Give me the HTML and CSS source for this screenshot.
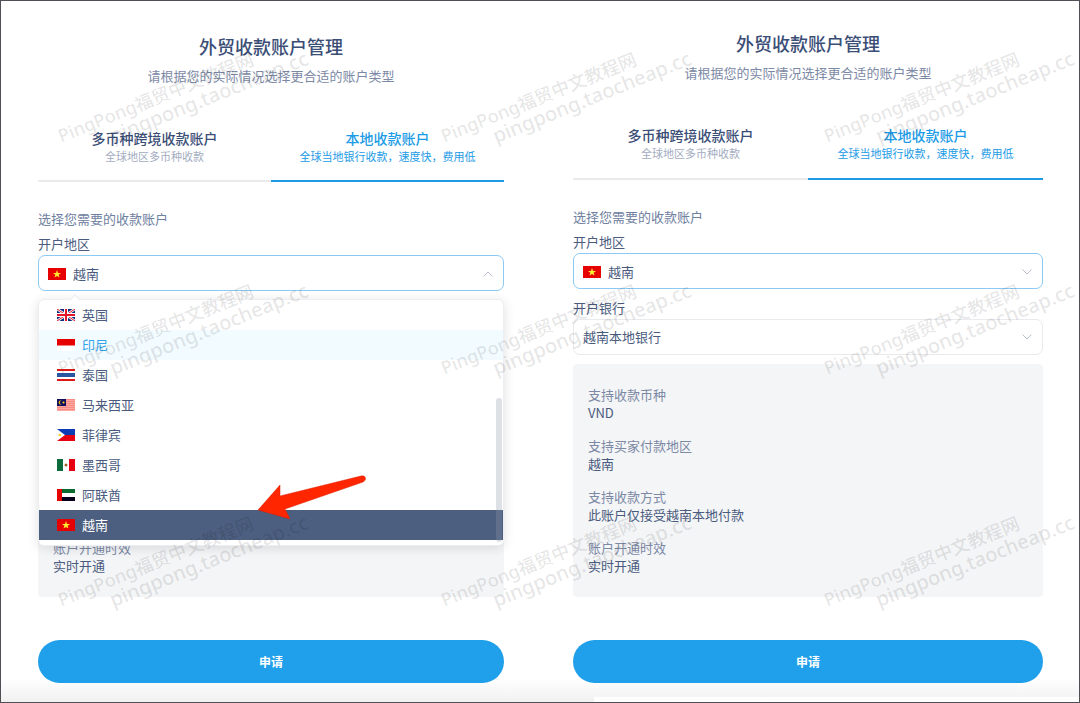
FILE: index.html
```
<!DOCTYPE html>
<html lang="zh-CN">
<head>
  <meta charset="UTF-8">
  <meta name="viewport" content="width=device-width, initial-scale=1">
  <title>外贸收款账户管理</title>
  <link rel="stylesheet" href="styles.css">
</head>
<body>

  <!-- shared flag for the selected region -->
  <svg class="defs" aria-hidden="true">
    <symbol id="flag-vn" viewBox="0 0 18 12">
      <rect width="18" height="12" fill="#e60000"/>
      <path d="M9 2l1 2.900h3l-2.400 1.800.9 2.900L9 7.900 6.500 9.600l.9-2.900L5 4.900h3z" fill="#ffee2e"/>
    </symbol>
  </svg>

  <main class="page">

    <section class="card card-open">
      <h1>外贸收款账户管理</h1>
      <p class="subline">请根据您的实际情况选择更合适的账户类型</p>

      <nav class="tabs">
        <a class="tab" href="#global">
          <span class="tab-title">多币种跨境收款账户</span>
          <span class="tab-note">全球地区多币种收款</span>
        </a>
        <a class="tab active" href="#local">
          <span class="tab-title">本地收款账户</span>
          <span class="tab-note">全球当地银行收款，速度快，费用低</span>
        </a>
      </nav>

      <form>
        <p class="hint">选择您需要的收款账户</p>

        <label for="region-1">开户地区</label>
        <div class="select-box focused">
          <svg class="flag"><use href="#flag-vn"/></svg>
          <select id="region-1"><option>越南</option></select>
          <svg class="chevron" viewBox="0 0 10 6"><path d="M.5 5.500L5 1l4.500 4.500"/></svg>

          <div class="dropdown">
            <ul class="options" role="listbox" aria-label="开户地区">
              <li role="option">
                <svg class="flag" viewBox="0 0 18 12">
                  <rect width="18" height="12" fill="#0a2a80"/>
                  <path d="M0 0l18 12M18 0L0 12" stroke="#fff" stroke-width="2.600"/>
                  <path d="M0 0l18 12M18 0L0 12" stroke="#e0162b" stroke-width="1"/>
                  <path d="M9 0v12M0 6h18" stroke="#fff" stroke-width="4"/>
                  <path d="M9 0v12M0 6h18" stroke="#e0162b" stroke-width="2"/>
                </svg>
                英国
              </li>
              <li class="hover" role="option">
                <svg class="flag" viewBox="0 0 18 12"><rect width="18" height="12" fill="#fff"/><rect width="18" height="6.500" fill="#e60000"/></svg>
                印尼
              </li>
              <li role="option">
                <svg class="flag" viewBox="0 0 18 12">
                  <rect width="18" height="12" fill="#fff"/>
                  <path d="M0 1h18M0 11h18" stroke="#dc1a1a" stroke-width="2"/>
                  <path d="M0 6h18" stroke="#2a55a0" stroke-width="4"/>
                </svg>
                泰国
              </li>
              <li role="option">
                <svg class="flag" viewBox="0 0 18 12">
                  <rect width="18" height="12" fill="#ffa8a0"/>
                  <path d="M0 .5h18M0 2.500h18M0 4.500h18M0 6.500h18M0 8.500h18M0 10.500h18" stroke="#f88a86"/>
                  <rect width="9" height="7" fill="#10105e"/>
                  <path d="M4.500 1.700a2 2 0 1 0 0 3.600 1.600 1.600 0 1 1 0-3.600z" fill="#fc0"/>
                  <circle cx="6.500" cy="3.500" r="1.100" fill="#fc0"/>
                </svg>
                马来西亚
              </li>
              <li role="option">
                <svg class="flag" viewBox="0 0 18 12">
                  <rect width="18" height="6" fill="#0b3bb5"/>
                  <rect y="6" width="18" height="6" fill="#e60012"/>
                  <path d="M0 0l8 6-8 6z" fill="#fff"/>
                  <circle cx="2.700" cy="6" r="1.200" fill="#fcd116"/>
                </svg>
                菲律宾
              </li>
              <li role="option">
                <svg class="flag" viewBox="0 0 18 12">
                  <rect width="18" height="12" fill="#fff"/>
                  <rect width="6" height="12" fill="#0b6b3a"/>
                  <rect x="12" width="6" height="12" fill="#e60012"/>
                  <circle cx="9" cy="6" r="1.500" fill="#a0612e"/>
                </svg>
                墨西哥
              </li>
              <li role="option">
                <svg class="flag" viewBox="0 0 18 12">
                  <rect width="18" height="12" fill="#fff"/>
                  <rect width="18" height="4" fill="#0b6b2e"/>
                  <rect y="8" width="18" height="4" fill="#08001c"/>
                  <rect width="5" height="12" fill="#e60000"/>
                </svg>
                阿联酋
              </li>
              <li class="selected" role="option" aria-selected="true">
                <svg class="flag"><use href="#flag-vn"/></svg>
                越南
              </li>
            </ul>
            <span class="scrollbar"></span>
          </div>
        </div>

        <label for="bank-1">开户银行</label>
        <div class="select-box">
          <select id="bank-1"><option>越南本地银行</option></select>
          <svg class="chevron" viewBox="0 0 10 6"><path d="M.5.5L5 5 9.500.5"/></svg>
        </div>

        <dl class="info">
          <div><dt>支持收款币种</dt><dd>VND</dd></div>
          <div><dt>支持买家付款地区</dt><dd>越南</dd></div>
          <div><dt>支持收款方式</dt><dd>此账户仅接受越南本地付款</dd></div>
          <div><dt>账户开通时效</dt><dd>实时开通</dd></div>
        </dl>

        <button type="button">申请</button>
      </form>

      <svg class="pointer" viewBox="0 0 110 46" aria-hidden="true">
        <path d="M1 35L23 10v11L104 1c5-1 6 4 2 6L28 34l5 10z" fill="#ff2600" stroke="#d81e00" stroke-width=".5"/>
      </svg>
    </section>

    <section class="card">
      <h1>外贸收款账户管理</h1>
      <p class="subline">请根据您的实际情况选择更合适的账户类型</p>

      <nav class="tabs">
        <a class="tab" href="#global">
          <span class="tab-title">多币种跨境收款账户</span>
          <span class="tab-note">全球地区多币种收款</span>
        </a>
        <a class="tab active" href="#local">
          <span class="tab-title">本地收款账户</span>
          <span class="tab-note">全球当地银行收款，速度快，费用低</span>
        </a>
      </nav>

      <form>
        <p class="hint">选择您需要的收款账户</p>

        <label for="region-2">开户地区</label>
        <div class="select-box focused">
          <svg class="flag"><use href="#flag-vn"/></svg>
          <select id="region-2"><option>越南</option></select>
          <svg class="chevron" viewBox="0 0 10 6"><path d="M.5.5L5 5 9.500.5"/></svg>
        </div>

        <label for="bank-2">开户银行</label>
        <div class="select-box">
          <select id="bank-2"><option>越南本地银行</option></select>
          <svg class="chevron" viewBox="0 0 10 6"><path d="M.5.5L5 5 9.500.5"/></svg>
        </div>

        <dl class="info">
          <div><dt>支持收款币种</dt><dd>VND</dd></div>
          <div><dt>支持买家付款地区</dt><dd>越南</dd></div>
          <div><dt>支持收款方式</dt><dd>此账户仅接受越南本地付款</dd></div>
          <div><dt>账户开通时效</dt><dd>实时开通</dd></div>
        </dl>

        <button type="button">申请</button>
      </form>
    </section>

    <div class="watermarks" aria-hidden="true">
      <p>PingPong福贸中文教程网<span>pingpong.taocheap.cc</span></p>
      <p>PingPong福贸中文教程网<span>pingpong.taocheap.cc</span></p>
      <p>PingPong福贸中文教程网<span>pingpong.taocheap.cc</span></p>
      <p>PingPong福贸中文教程网<span>pingpong.taocheap.cc</span></p>
      <p>PingPong福贸中文教程网<span>pingpong.taocheap.cc</span></p>
      <p>PingPong福贸中文教程网<span>pingpong.taocheap.cc</span></p>
      <p>PingPong福贸中文教程网<span>pingpong.taocheap.cc</span></p>
      <p>PingPong福贸中文教程网<span>pingpong.taocheap.cc</span></p>
      <p>PingPong福贸中文教程网<span>pingpong.taocheap.cc</span></p>
    </div>
  </main>

</body>
</html>
```

FILE: styles.css
```
* { box-sizing: border-box; }
body {
  margin: 0;
  font-family: "Noto Sans CJK SC", "Noto Sans", sans-serif;
  font-size: 13px;
  line-height: 18px;
  color: #4a5b7e;
  background: #fff;
}
h1, p, dl, dd, ul { margin: 0; padding: 0; }
.defs { position: absolute; width: 0; height: 0; }

.page {
  position: relative;
  display: grid;
  grid-template-columns: 466fr 470fr;
  column-gap: 69px;
  min-height: 100vh;
  padding: 0 36px 0 37px;
  border: 1px solid #504f56;
  background: linear-gradient(to top, #f1f1f1, #fff 24px);
  overflow: hidden;
}
/* white strip along the bottom right edge */
.page::after {
  content: "";
  position: absolute;
  right: 0; bottom: 0;
  width: 45%; height: 5px;
  background: #fff;
}

.card { position: relative; padding: 30px 0 18px; }
.card-open { padding-top: 33px; }
h1 {
  font-size: 18px; line-height: 24px;
  font-weight: 500; text-align: center;
  color: #3a4e76;
}
.subline { margin-top: 9px; text-align: center; color: #7c89a5; }

.tabs { display: flex; margin-top: 43px; }
.tab {
  flex: 1;
  display: flex; flex-direction: column;
  align-items: center;
  padding-bottom: 17px;
  border-bottom: 2px solid #e9eaec;
  text-decoration: none;
  color: #3a4e76;
}
.card-open .tab { padding-bottom: 16px; }
.tab-title { font-size: 14px; line-height: 20px; font-weight: 500; }
.tab-note { font-size: 11px; line-height: 16px; color: #a3acbf; }
.tab.active { border-color: #1c9be6; color: #1c9be6; }
.tab.active .tab-note { color: #1c9be6; }

form { padding-top: 28px; }
.hint { margin-bottom: 7px; color: #7080a0; }
label { display: block; margin-bottom: 2px; }

.select-box {
  position: relative;
  display: flex; align-items: center;
  gap: 7px;
  height: 36px; padding: 0 10px 0 9px;
  border: 1px solid #e8eaee;
  border-radius: 7px;
  background: #fff;
}
.select-box.focused {
  margin-bottom: 10px; padding-top: 2px;
  border-color: #8cc9f5;
}
.card-open .select-box.focused { margin-bottom: 9px; }
select {
  flex: 1;
  appearance: none;
  border: none; outline: none;
  padding: 0; background: none;
  font: inherit; color: inherit;
}
.flag { flex: none; width: 18px; height: 12px; }
.chevron {
  width: 10px; height: 6px;
  fill: none; stroke: #b8c0cf;
}

.dropdown {
  position: absolute; z-index: 2;
  top: 43px; left: -1px; right: -1px;
  padding-bottom: 5px;
  border: 1px solid #eceef2;
  border-radius: 6px;
  background: #fff;
  box-shadow: 0 2px 12px rgba(0,0,0,.12);
}
.dropdown::before {
  content: "";
  position: absolute;
  top: -4px; left: 32px;
  width: 7px; height: 7px;
  border: 1px solid #eceef2;
  border-right: none; border-bottom: none;
  background: #fff;
  transform: rotate(45deg);
}
.options { list-style: none; }
.options li {
  display: flex; align-items: center;
  gap: 7px;
  height: 30px; padding-left: 18px;
}
.options .hover { background: #f2fbff; color: #32a4ea; }
.options .selected { background: #4d5f80; color: #fff; }
.scrollbar {
  position: absolute;
  right: 1px; bottom: 3px;
  width: 6px; height: 144px;
  border-radius: 3px;
  background: rgba(144,152,170,.3);
}

.info {
  display: flex; flex-direction: column;
  gap: 15px;
  margin-top: 9px; padding: 22px 15px;
  border-radius: 4px;
  background: #f4f5f7;
}
.card-open .info { margin-top: 8px; }
.info dt { color: #7c89a5; }

button {
  display: block;
  width: 100%; height: 43px;
  margin-top: 43px;
  border: none; border-radius: 22px;
  background: #209fea; color: #fff;
  font-family: inherit; font-size: 12px; font-weight: 700;
  cursor: pointer;
}

/* red arrow at the selected option */
.pointer {
  position: absolute; z-index: 3;
  top: 474px; left: 47%;
  width: 110px; height: 46px;
}

.watermarks {
  position: absolute; z-index: 4;
  inset: 0;
  display: grid;
  grid-template-columns: repeat(3, 383px);
  grid-auto-rows: 232px;
  padding: 126px 0 0 54px;
  overflow: hidden;
  pointer-events: none;
  font-family: "Noto Sans", "Noto Sans CJK SC", sans-serif;
  font-size: 18px; line-height: 20px;
  font-weight: 500;
  white-space: nowrap;
  color: rgba(0,0,0,.11);
}
.watermarks p { transform: rotate(-22deg); transform-origin: 0 0; height: 40px; }
.watermarks span {
  display: block;
  padding-left: 48px;
  font-size: 20px;
}
```
